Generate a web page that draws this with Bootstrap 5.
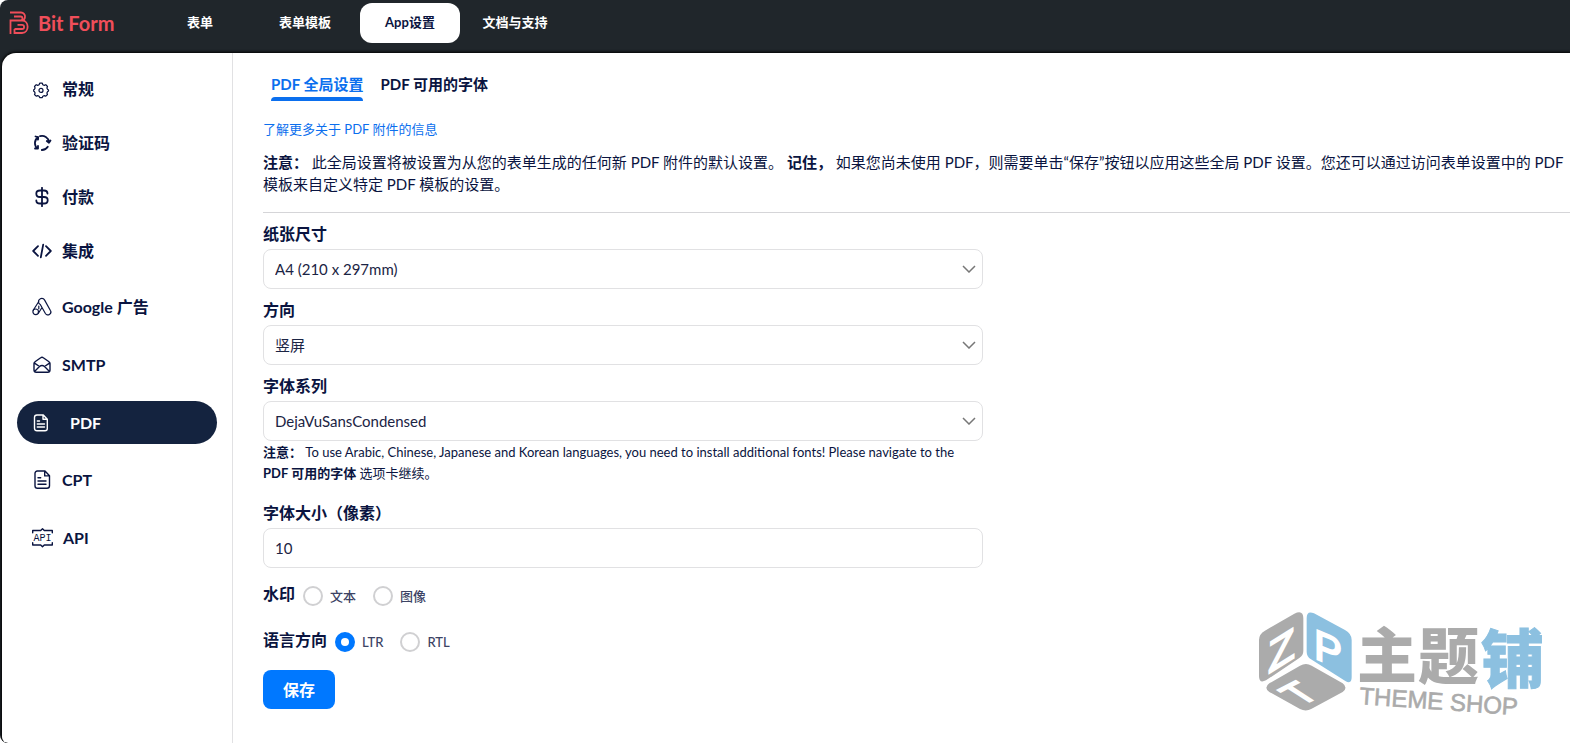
<!DOCTYPE html>
<html lang="zh-CN">
<head>
<meta charset="utf-8">
<meta name="viewport" content="width=device-width, initial-scale=1">
<title>Bit Form – App设置</title>
<link href="https://cdn.jsdelivr.net/npm/bootstrap@5.3.0/dist/css/bootstrap.min.css" rel="stylesheet">
<style>
  :root { --ink: #0a1440; --blue: #0b6fee; --line: #e1e1e3; }
  body { font-family: Lato, "Noto Sans CJK SC", sans-serif; font-size: 15px; line-height: 22px; color: var(--ink); background: #fff; }
  .shell { background: #20262b; border-radius: 8px 0 0 8px; padding-left: 2px; overflow: hidden; }
  .topbar { height: 53px; padding-top: 3px; }
  .brand { width: 148px; height: 40px; padding-left: 7px; color: #f04e5a; font-size: 20px; font-weight: 700; text-decoration: none; }
  .topnav { gap: 5px; }
  .topnav .nav-link { min-width: 100px; height: 40px; padding: 0 8px; border-radius: 12px; color: #fff; font-size: 13px; font-weight: 700; line-height: 38px; text-align: center; }
  .topnav .nav-link.active { background: #fff; color: var(--ink); }
  .panel { background: #fff; border-radius: 14px 0 0 6px; min-height: calc(100vh - 53px); box-shadow: 0 0 3px 1px #000; }
  .sidebar { width: 231px; flex: none; border-right: 1px solid var(--line); padding: 14px 15px; }
  .sidebar .nav-link { display: flex; align-items: center; gap: 10px; height: 43px; margin-bottom: 11px; padding: 0 15px; border-radius: 22px; color: var(--ink); font-size: 16px; font-weight: 700; }
  .sidebar .nav-link.latin { margin-bottom: 15px; }
  .sidebar .nav-link.first { margin-top: 2px; }
  .sidebar .nav-link.active { background: #14233f; color: #fff; gap: 18px; margin-bottom: 14px; }
  .sidebar svg { flex: none; fill: none; stroke: currentColor; stroke-width: 1.4; stroke-linecap: round; stroke-linejoin: round; }
  .sidebar svg.heavy { stroke-width: 1.8; }
  .content { padding: 20px 0 32px 30px; min-width: 0; }
  .tabs { gap: 17px; padding-left: 8px; margin-bottom: 18px; }
  .tabs .nav-link { padding: 0; color: var(--ink); font-weight: 700; line-height: 22px; }
  .tabs .nav-link.active { color: var(--blue); }
  .tabs .nav-link.active::after { content: ""; display: block; height: 4px; margin-top: 2px; border-radius: 4px 4px 0 0; background: var(--blue); }
  .more { display: block; color: var(--blue); font-size: 13px; line-height: 20px; text-decoration: none; margin-bottom: 12px; }
  .intro { margin: 0 0 17px; }
  .rule { margin: 0; border-color: #d5d5d8; opacity: 1; }
  .fields { max-width: 720px; }
  .fields .form-label, .caption { font-size: 16px; font-weight: 700; line-height: 24px; }
  .fields .form-label { display: block; margin: 9px 0 3px; }
  .fields .form-control, .fields .form-select { height: 40px; padding: 0 11px; font-size: 15px; color: #1b2444; border: 1px solid var(--line); border-radius: 8px; }
  .fields .form-select { background-image: url("data:image/svg+xml,%3Csvg xmlns='http://www.w3.org/2000/svg' viewBox='0 0 14 8'%3E%3Cpath d='M1 1l6 6 6-6' fill='none' stroke='%23777' stroke-width='1.5'/%3E%3C/svg%3E"); background-size: 14px 8px; background-position: right 6px center; }
  .hint { font-size: 13px; line-height: 21px; margin: 1px 0 17px; padding-right: 16px; }
  .choices { display: flex; align-items: center; height: 24px; margin-top: 15px; }
  .caption { padding-bottom: 2px; }
  .choices .form-check-input { width: 20px; height: 20px; margin: 2px 7px 0 8px; border: 2px solid #d0d0d2; }
  .choices label { font-size: 13px; font-weight: 500; color: #3c4364; margin: 2px 9px 0 0; }
  .choices .form-check-input:checked { background-color: #0078ff; border-color: #0078ff; }
  .choices.later { margin-top: 22px; }
  .save { width: 72px; height: 39px; margin-top: 17px; padding: 0; border: 0; border-radius: 8px; background: #0078ff; font-size: 16px; font-weight: 700; line-height: 37px; }
  .watermark { position: absolute; right: 0; bottom: 0; pointer-events: none; }
  .watermark text { font-family: "Noto Sans CJK SC", sans-serif; font-weight: 900; }
  .watermark .sub, .watermark .face { font-family: "Liberation Sans", sans-serif; font-weight: 400; }
</style>
</head>
<body>
<div class="shell">
  <header class="topbar d-flex">
    <a class="brand d-flex align-items-center gap-2" href="#">
      <svg width="21" height="24" viewBox="0 0 21 24" fill="none" stroke="currentColor" stroke-width="1.8" aria-hidden="true">
        <path d="M1 1.500h11a4 4 0 0 1 4 4.500c0 1.500-.6 2.700-1.800 3.500M5 5.500h6.500a1.700 1.700 0 0 1 0 4H1.500v13.500M8 9.500h5c7.500 0 7.500 12.500 0 12.500H5.500v-4M5.500 18h7.500a2 2 0 0 0 0-4.200H8.500"/>
      </svg>
      <span>Bit Form</span>
    </a>
    <nav class="nav topnav">
      <a class="nav-link" href="#">表单</a>
      <a class="nav-link" href="#">表单模板</a>
      <a class="nav-link active" href="#">App设置</a>
      <a class="nav-link" href="#">文档与支持</a>
    </nav>
  </header>

  <div class="panel d-flex position-relative">
    <nav class="sidebar nav flex-column flex-nowrap">
      <a class="nav-link" href="#">
        <svg width="20" height="20" viewBox="0 0 20 20"><g transform="translate(-1 1)" stroke-width="1.200"><path d="M8.700 3.200h2.600l.5 1.500 1.500.7 1.500-.7 1.700 1.800-.6 1.500.6 1.300 1 .7v1l-1 .7-.6 1.300.6 1.500-1.700 1.700-1.500-.6-1.500.6-.5 1.400H8.700l-.6-1.400-1.400-.6-1.500.6-1.700-1.700.6-1.500-.6-1.300-.8-.5V9.800l.8-.5.6-1.300-.6-1.500 1.700-1.800 1.500.7 1.400-.7z"/><circle cx="10" cy="10.400" r="2"/></g></svg>
        常规</a>
      <a class="nav-link" href="#">
        <svg class="heavy" width="20" height="20" viewBox="0 0 20 20"><path d="M8 3.200a7 7 0 0 1 9 5.800M14.800 8l2.200 1.800 1.500-2.300M15.800 13.800a7 7 0 0 1-6 3.200M5.600 15.600A7 7 0 0 1 5.700 4.500M3.500 3.500l2.700.7-.2 2.500M3 15.500h3v-2.600"/></svg>
        验证码</a>
      <a class="nav-link" href="#">
        <svg class="heavy" width="20" height="20" viewBox="0 0 20 20"><path d="M10 .8v18.400M15.500 6.500c0-2-1.500-3-3.500-3H8c-2.300 0-3.700 1.300-3.700 3.200S5.700 10 8 10h4c2.300 0 3.700 1.200 3.700 3.200s-1.400 3.300-3.700 3.300H8c-2 0-3.700-1-3.700-3"/></svg>
        付款</a>
      <a class="nav-link" href="#">
        <svg class="heavy" width="20" height="20" viewBox="0 0 20 20"><path d="M6 5.200L1.200 10 6 14.800M14 5.200l4.800 4.800-4.800 4.800M11.200 3.700L8.800 16.300"/></svg>
        集成</a>
      <a class="nav-link latin first" href="#">
        <svg width="20" height="20" viewBox="0 0 20 20"><g stroke-width="1.200"><path d="M7.300 2.700a3 3 0 0 1 5.200.2l5.900 10.600a2.900 2.900 0 0 1-5 3L8.300 7.500a3 3 0 0 1-1-4.800zM6.800 4.500L1.200 13.300M10 10.500l-3.600 5.700M6.800 9v2.800"/><circle cx="3.700" cy="14.800" r="2.800"/></g></svg>
        Google 广告</a>
      <a class="nav-link latin" href="#">
        <svg width="20" height="20" viewBox="0 0 20 20"><path d="M2 8.500a2 2 0 0 1 1-1.700l5.700-4a2 2 0 0 1 2.600 0l5.700 4a2 2 0 0 1 1 1.700V15a2.300 2.300 0 0 1-2.300 2.300H4.300A2.300 2.300 0 0 1 2 15zM2.500 8.200l5 3.300a4 4 0 0 1 5 0l5-3.300M7.500 11.500L3 16M12.500 11.500L17 16"/></svg>
        SMTP</a>
      <a class="nav-link latin active" href="#">
        <svg width="20" height="20" viewBox="0 0 20 20"><path d="M2.500 4.500a2.500 2.500 0 0 1 2.500-2.500h6.300l4 4.200v9.300a2.300 2.300 0 0 1-2.300 2.300H5a2.500 2.500 0 0 1-2.500-2.300zM11 2.300v4h4M5.300 8h2.200M5.300 11h7.200M5.300 14h7.200"/></svg>
        PDF</a>
      <a class="nav-link latin" href="#">
        <svg width="20" height="20" viewBox="0 0 20 20"><path d="M3 3.300A2.300 2.300 0 0 1 5.300 1h7.700l4.500 4.700v10a2.500 2.500 0 0 1-2.500 2.500H5.500A2.500 2.500 0 0 1 3 15.700zM12.700 1.200v4.700h4.500M6 7.700h2.700M6 11h8M6 14.300h8"/></svg>
        CPT</a>
      <a class="nav-link latin" href="#">
        <svg width="21" height="20" viewBox="0 0 21 20"><path d="M.7 4.700V2.500h8l1.800-1.700 1.800 1.700h8v2.200M.7 14.700V17h8l1.800 1.800 1.800-1.800h8v-2.300"/><text x="10.500" y="13" text-anchor="middle" font-family="Liberation Mono, monospace" font-size="10" font-weight="400" fill="currentColor" stroke="none">API</text></svg>
        API</a>
    </nav>

    <main class="content flex-grow-1">
      <nav class="nav tabs">
        <a class="nav-link active" href="#">PDF 全局设置</a>
        <a class="nav-link" href="#">PDF 可用的字体</a>
      </nav>
      <a class="more" href="#">了解更多关于 PDF 附件的信息</a>
      <p class="intro"><b>注意：</b> 此全局设置将被设置为从您的表单生成的任何新 PDF 附件的默认设置。 <b>记住，</b> 如果您尚未使用 PDF，则需要单击“保存”按钮以应用这些全局 PDF 设置。您还可以通过访问表单设置中的 PDF 模板来自定义特定 PDF 模板的设置。</p>
      <hr class="rule">
      <form class="fields">
        <label class="form-label" for="paper">纸张尺寸</label>
        <select class="form-select" id="paper"><option>A4 (210 x 297mm)</option></select>
        <label class="form-label" for="orient">方向</label>
        <select class="form-select" id="orient"><option>竖屏</option></select>
        <label class="form-label" for="family">字体系列</label>
        <select class="form-select" id="family"><option>DejaVuSansCondensed</option></select>
        <p class="hint"><b>注意：</b> To use Arabic, Chinese, Japanese and Korean languages, you need to install additional fonts! Please navigate to the <b>PDF 可用的字体</b> 选项卡继续。</p>
        <label class="form-label" for="size">字体大小（像素）</label>
        <input class="form-control" id="size" type="text" value="10">
        <div class="choices" role="radiogroup" aria-labelledby="wm">
          <span class="caption" id="wm">水印</span>
          <input class="form-check-input" type="radio" name="wm" id="wm-text"><label for="wm-text">文本</label>
          <input class="form-check-input" type="radio" name="wm" id="wm-img"><label for="wm-img">图像</label>
        </div>
        <div class="choices later" role="radiogroup" aria-labelledby="dir">
          <span class="caption" id="dir">语言方向</span>
          <input class="form-check-input" type="radio" name="dir" id="ltr" checked><label for="ltr">LTR</label>
          <input class="form-check-input" type="radio" name="dir" id="rtl"><label for="rtl">RTL</label>
        </div>
        <button class="btn btn-primary save" type="button">保存</button>
      </form>
    </main>

    <svg class="watermark" width="330" height="153" viewBox="0 0 330 153" role="img" aria-label="主题铺 THEME SHOP">
      <g transform="scale(.33333)">
        <path fill="#ababab" d="M75 122L163 71Q190 58 190 85V182Q190 196 178 204L78 271Q57 282 57 258V150Q57 132 75 122z"/>
        <path fill="#8cc0e0" d="M200 85Q200 60 222 70L315 120Q335 131 335 150V262Q335 284 316 273L213 208Q200 200 200 185z"/>
        <path fill="#ababab" d="M180 227Q198 217 215 227L308 280Q325 293 308 306L215 356Q198 366 180 357L88 306Q70 293 88 280z"/>
      </g>
      <g fill="#fff" stroke="#fff" stroke-width="2">
        <text class="face" font-size="44" transform="translate(28 84) skewY(-32)">Z</text>
        <text class="face" font-size="42" transform="translate(74 68) skewY(22)">P</text>
        <text class="face" font-size="36" transform="translate(61 116) rotate(-27) skewX(30)">T</text>
      </g>
      <g fill="#ababab">
        <text x="117" y="88" font-size="60">主</text>
        <text x="178" y="89" font-size="61">题</text>
        <text x="241" y="92" font-size="63" fill="#8cc0e0" stroke="#8cc0e0">铺</text>
      </g>
      <text class="sub" font-size="24" fill="#ababab" stroke="#ababab" stroke-width=".6" transform="translate(119 114) rotate(4)">THEME SHOP</text>
    </svg>
  </div>
</div>
<script src="https://cdn.jsdelivr.net/npm/bootstrap@5.3.0/dist/js/bootstrap.bundle.min.js"></script>
</body>
</html>
